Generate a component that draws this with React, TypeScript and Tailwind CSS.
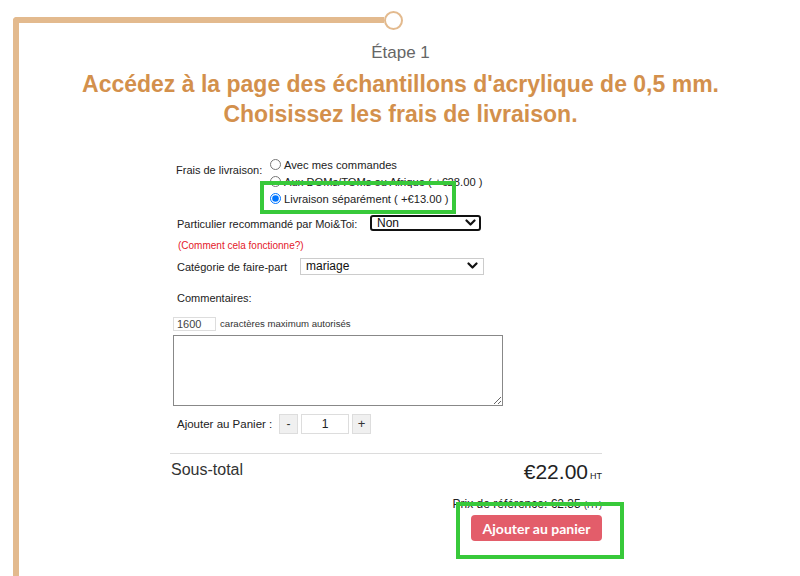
import React from "react";

function Chevron() {
    return (
        <svg width="11" height="8" viewBox="0 0 11 8" className="shrink-0">
            <polyline points="1.5,1.5 5.5,5.5 9.5,1.5" fill="none" stroke="#111" strokeWidth="2.2" strokeLinecap="round" strokeLinejoin="round" />
        </svg>
    );
}

function Radio({ checked, label }: { checked?: boolean; label: string }) {
    return (
        <label className="flex items-center h-[17px] gap-[3px]">
            <input type="radio" name="livraison" defaultChecked={checked} className="m-0 w-[11px] h-[11px] accent-[#0075ff]" />
            <span className="text-[11.2px] text-[#222] leading-[14px] whitespace-nowrap">{label}</span>
        </label>
    );
}

export default function App() {
    return (
        <div className="relative w-[800px] h-[576px] overflow-hidden bg-white font-['Liberation_Sans',Arial,sans-serif]">
            {/* step frame */}
            <div className="ml-[13px] mt-[17px] border-l-[6px] border-[#e3ba8e] rounded-tl-[4px] pb-[40px]">
                <div className="-ml-[6px] flex items-center h-[6px]">
                    <div className="w-[371px] h-[6px] bg-[#e3ba8e] rounded-tl-[4px]" />
                    <div className="w-[19px] h-[19px] shrink-0 rounded-full border-2 border-[#e3ba8e] bg-white" />
                </div>

                <div className="pr-[18px] flex flex-col items-center">
                    <div className="mt-[20px] text-[17px] leading-[20px] text-[#666]">Étape 1</div>
                    <h1 className="mt-[6px] text-center text-[23px] leading-[30px] font-bold text-[#d3904c]">
                        Accédez à la page des échantillons d'acrylique de 0,5 mm.
                        <br />
                        Choisissez les frais de livraison.
                    </h1>
                </div>

                <div className="ml-[151px] w-[432px] mt-[27px] text-[#222]">
                    <div className="flex items-start">
                        <div className="w-[100px] pl-[6px] pt-[7px] text-[11px] leading-[14px] whitespace-nowrap">Frais de livraison:</div>
                        <div className="flex flex-col">
                            <Radio label="Avec mes commandes" />
                            <Radio label="Aux DOMs/TOMs ou Afrique ( +€28.00 )" />
                            <Radio checked label="Livraison séparément ( +€13.00 )" />
                        </div>
                    </div>

                    <div className="mt-[7px] flex items-center">
                        <div className="w-[200px] pl-[7px] pt-[2px] text-[11px] leading-[16px] whitespace-nowrap">Particulier recommandé par Moi&amp;Toi:</div>
                        <div className="w-[111px] h-[16px] border-2 border-[#111] rounded-[3px] flex items-center justify-between pl-[5px] pr-[3px]">
                            <span className="text-[12px] leading-[12px] text-[#111]">Non</span>
                            <Chevron />
                        </div>
                    </div>

                    <div className="mt-[8px] pl-[8px] text-[10px] leading-[12px] text-[#e4202a]">(Comment cela fonctionne?)</div>

                    <div className="mt-[5px] flex items-center">
                        <div className="w-[130px] pl-[7px] pt-[2px] text-[11px] leading-[16px] whitespace-nowrap">Catégorie de faire-part</div>
                        <div className="w-[184px] h-[17px] border border-[#ccc] flex items-center justify-between pl-[5px] pr-[5px]">
                            <span className="text-[12px] leading-[14px] text-[#111]">mariage</span>
                            <Chevron />
                        </div>
                    </div>

                    <div className="mt-[16px] pl-[7px] text-[11px] leading-[14px]">Commentaires:</div>

                    <div className="mt-[12px] pl-[3px] flex items-center gap-[4px]">
                        <div className="w-[43px] h-[14px] border border-[#ddd] pl-[3px] text-[11px] leading-[12px] text-[#444]">1600</div>
                        <span className="text-[9.6px] leading-[12px] text-[#333]">caractères maximum autorisés</span>
                    </div>

                    <textarea className="block mt-[4px] ml-[3px] w-[330px] h-[71px] border border-[#888] resize-y" />

                    <div className="mt-[8px] flex items-center h-[20px]">
                        <div className="w-[109px] pl-[7px] text-[11.5px] leading-[14px] whitespace-nowrap">Ajouter au Panier :</div>
                        <div className="flex gap-[3px]">
                            <button className="w-[19px] h-[20px] bg-[#f0f0f0] border border-[#ddd] text-[12px] leading-[12px] text-[#333]">-</button>
                            <div className="w-[48px] h-[20px] border border-[#ddd] flex items-center justify-center text-[12px] text-[#222]">1</div>
                            <button className="w-[19px] h-[20px] bg-[#f0f0f0] border border-[#ddd] text-[13px] leading-[12px] text-[#333]">+</button>
                        </div>
                    </div>

                    <div className="mt-[19px] h-px bg-[#dcdcdc]" />

                    <div className="mt-[6px] flex items-start justify-between">
                        <span className="pl-[1px] text-[16px] leading-[20px] text-[#333]">Sous-total</span>
                        <span className="flex items-baseline gap-[2px] text-[#222]">
                            <span className="text-[21px] leading-[24px]">€22.00</span>
                            <span className="text-[9px]">HT</span>
                        </span>
                    </div>

                    <div className="mt-[13px] flex justify-end items-baseline text-[12px] leading-[14px] text-[#222]">
                        Prix de référence: €2.35&nbsp;<span className="text-[9px]">(HT)</span>
                    </div>

                    <div className="mt-[3px] flex justify-end">
                        <button className="w-[131px] h-[26px] rounded-[4px] bg-[#e35d6a] text-white text-[14px] font-bold font-['Lato',sans-serif]">
                            Ajouter au panier
                        </button>
                    </div>
                </div>
            </div>

            {/* annotation boxes */}
            <div className="absolute left-[260px] top-[181px] w-[196px] h-[33px] border-4 border-[#38c93a] pointer-events-none" />
            <div className="absolute left-[456px] top-[502px] w-[168px] h-[57px] border-4 border-[#38c93a] pointer-events-none" />
        </div>
    );
}
